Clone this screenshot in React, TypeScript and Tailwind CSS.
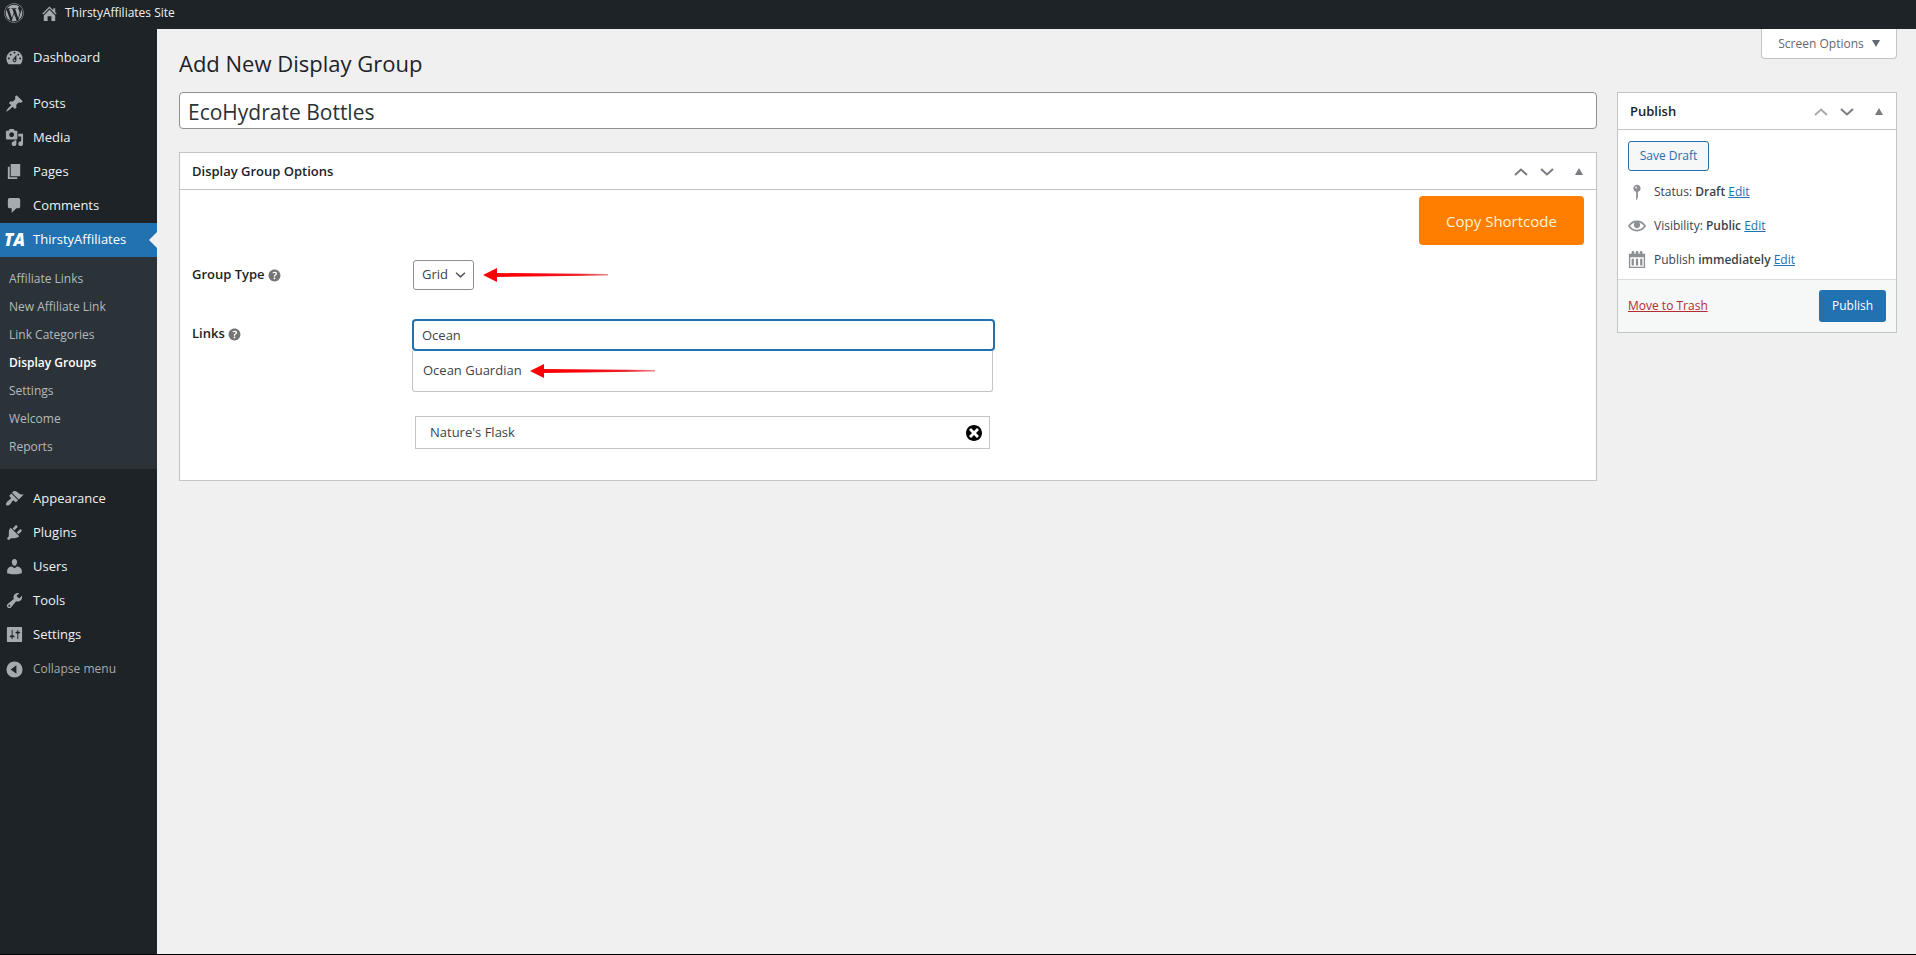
import type { ReactNode } from "react";
import { FaWordpress } from "react-icons/fa";

const paths = {
  home: "M16 8.5l1.53 1.53-1.06 1.06L10 4.6l-6.47 6.49-1.06-1.06L10 2.5l4 4v-2h2v4zm-6-2.46l6 5.99V18h-4v-5H8v5H4v-5.97z",
  dashboard:
    "M3.76 17h12.48A8.17 8.17 0 0 0 18.5 11.3c0-4.7-3.8-8.3-8.5-8.3s-8.5 3.6-8.5 8.3c0 2.2.85 4.2 2.26 5.7zM10 4c.55 0 1 .45 1 1s-.45 1-1 1-1-.45-1-1 .45-1 1-1zM6 6c.55 0 1 .45 1 1s-.45 1-1 1-1-.45-1-1 .45-1 1-1zm8 0c.55 0 1 .45 1 1s-.45 1-1 1-1-.45-1-1 .45-1 1-1zm-5.37 5.55L12 7v6c0 1.1-.9 2-2 2s-2-.9-2-2c0-.57.24-1.08.63-1.45zM4 10c.55 0 1 .45 1 1s-.45 1-1 1-1-.45-1-1 .45-1 1-1zm12 0c.55 0 1 .45 1 1s-.45 1-1 1-1-.45-1-1 .45-1 1-1zm-5 3c0-.55-.45-1-1-1s-1 .45-1 1 .45 1 1 1 1-.45 1-1z",
  posts:
    "M10.44 3.02l1.82-1.82 6.36 6.35-1.83 1.82c-1.05-.68-2.48-.57-3.41.36l-.75.75c-.92.93-1.04 2.35-.35 3.41l-1.83 1.82-2.41-2.41-2.8 2.79c-.42.42-3.38 2.71-3.8 2.29s1.86-3.39 2.28-3.81l2.79-2.79L4.1 9.36l1.83-1.82c1.05.69 2.48.57 3.4-.36l.75-.75c.93-.92 1.05-2.35.36-3.41z",
  media:
    "M13 11V4c0-.55-.45-1-1-1h-1.67L9 1H5L3.67 3H2c-.55 0-1 .45-1 1v7c0 .55.45 1 1 1h10c.55 0 1-.45 1-1zM7 4.5c1.38 0 2.5 1.12 2.5 2.5S8.38 9.5 7 9.5 4.5 8.38 4.5 7 5.62 4.5 7 4.5zM14 6h5v10.5c0 1.38-1.12 2.5-2.5 2.5S14 17.88 14 16.5s1.12-2.5 2.5-2.5c.17 0 .34.02.5.05V9h-3V6zm-4 8.05V13h2v3.5c0 1.38-1.12 2.5-2.5 2.5S7 17.88 7 16.5 8.12 14 9.5 14c.17 0 .34.02.5.05z",
  pages: "M6 15V2h10v13H6zm-1 1h8v2H3V5h2v11z",
  comments:
    "M5 2h9c1.1 0 2 .9 2 2v7c0 1.1-.9 2-2 2h-2l-5 5v-5H5c-1.1 0-2-.9-2-2V4c0-1.1.9-2 2-2z",
  appearance:
    "M14.48 11.06L7.41 3.99l1.5-1.5c.5-.56 2.3-.47 3.51.32 1.21.8 1.43 1.28 2.91 2.1 1.18.64 2.45 1.26 4.45.85zm-.71.71L6.7 4.7 4.93 6.47c-.39.39-.39 1.02 0 1.41l1.06 1.06c.39.39.39 1.03 0 1.42-.6.6-1.43 1.11-2.21 1.69-.35.26-.7.53-1.01.84C1.43 14.23.4 16.08 1.4 17.07c.99 1 2.84-.03 4.18-1.36.31-.31.58-.66.85-1.02.57-.78 1.08-1.61 1.69-2.21.39-.39 1.02-.39 1.41 0l1.06 1.06c.39.39 1.02.39 1.41 0z",
  plugins:
    "M13.11 4.36L9.87 7.6 8 5.73l3.24-3.24c.35-.34 1.05-.2 1.56.32.52.51.66 1.21.31 1.55zm-8 1.77l.91-1.12 9.01 9.01-1.19.84c-.71.71-2.63 1.16-3.82 1.16H6.14L4.9 17.26c-.59.59-1.54.59-2.12 0-.59-.58-.59-1.53 0-2.12l1.24-1.24v-3.88c0-1.13.4-3.19 1.09-3.89zm7.26 3.97l3.24-3.24c.34-.35 1.04-.21 1.55.31.52.51.66 1.21.31 1.55l-3.24 3.25z",
  users:
    "M10 9.25c-2.27 0-2.73-3.44-2.73-3.44C7 4.02 7.82 2 9.97 2c2.16 0 2.98 2.02 2.71 3.81 0 0-.41 3.44-2.68 3.44zm0 2.57L12.72 10c2.39 0 5.02 2.33 5.02 4.53v2.49s-3.65 1.13-7.74 1.13c-4.15 0-7.74-1.13-7.74-1.13v-2.49c0-2.25 2.44-4.48 4.97-4.48z",
  tools:
    "M16.68 9.77c-1.34 1.34-3.3 1.67-4.95.99l-5.41 6.52c-.99.99-2.59.99-3.58 0s-.99-2.59 0-3.57l6.52-5.42c-.68-1.65-.35-3.61.99-4.95 1.28-1.28 3.12-1.62 4.72-1.06l-2.89 2.89 2.82 2.82 2.86-2.87c.53 1.58.18 3.39-1.08 4.65zM3.81 16.21c.4.39 1.04.39 1.43 0 .4-.4.4-1.04 0-1.43-.39-.4-1.03-.4-1.43 0-.39.39-.39 1.03 0 1.43z",
  settings:
    "M18 17V3c0-.55-.45-1-1-1H3c-.55 0-1 .45-1 1v14c0 .55.45 1 1 1h14c.55 0 1-.45 1-1zM8 11h1c.55 0 1 .45 1 1s-.45 1-1 1H8v1.5c0 .28-.22.5-.5.5s-.5-.22-.5-.5V13H6c-.55 0-1-.45-1-1s.45-1 1-1h1V5.5c0-.28.22-.5.5-.5s.5.22.5.5V11zm5-2h-1c-.55 0-1-.45-1-1s.45-1 1-1h1V5.5c0-.28.22-.5.5-.5s.5.22.5.5V7h1c.55 0 1 .45 1 1s-.45 1-1 1h-1v5.5c0 .28-.22.5-.5.5s-.5-.22-.5-.5V9z",
  collapse: "M10 1.5a8.5 8.5 0 1 0 0 17 8.5 8.5 0 0 0 0-17zM6 10l6-4.5v9z",
  pin: "M14 6c0 1.86-1.28 3.41-3 3.86V16c0 1-2 3-2 3V9.86c-1.72-.45-3-2-3-3.86 0-2.21 1.79-4 4-4s4 1.79 4 4zM8 5c0 .55.45 1 1 1s1-.45 1-1-.45-1-1-1-1 .45-1 1z",
  eye: "M19.7 9.4C17.7 6 14 3.9 10 3.9S2.3 6 .3 9.4L0 10l.3.6c2 3.4 5.7 5.5 9.7 5.5s7.7-2.1 9.7-5.5l.3-.6-.3-.6zM10 14.1c-3.1 0-6-1.6-7.7-4.1C3.6 8 5.7 6.6 8 6.1c-.9.6-1.5 1.7-1.5 2.9 0 1.9 1.6 3.5 3.5 3.5s3.5-1.6 3.5-3.5c0-1.2-.6-2.3-1.5-2.9 2.3.5 4.4 1.9 5.7 3.9-1.7 2.5-4.6 4.1-7.7 4.1z",
  calendar:
    "M1 3h3V1.5a1.5 1.5 0 0 1 3 0V3h1.5V1.5a1.5 1.5 0 0 1 3 0V3H13V1.5a1.5 1.5 0 0 1 3 0V3h3v16H1zM2.5 7v10.5h15V7zM4 8.5h2.5V16H4zM8.75 8.5h2.5V16h-2.5zM13.5 8.5H16V16h-2.5z",
  dismiss:
    "M10 2c4.42 0 8 3.58 8 8s-3.58 8-8 8-8-3.58-8-8 3.58-8 8-8zm5 11l-3-3 3-3-2-2-3 3-3-3-2 2 3 3-3 3 2 2 3-3 3 3z",
  help: "M17 10c0-3.87-3.14-7-7-7-3.87 0-7 3.13-7 7s3.13 7 7 7c3.86 0 7-3.13 7-7zm-6.3 1.48H9.14v-.43c0-.38.08-.7.24-.98s.46-.57.88-.89c.41-.29.68-.53.81-.71.14-.18.2-.39.2-.62 0-.25-.09-.44-.28-.58-.19-.13-.45-.19-.79-.19-.58 0-1.25.19-2 .57l-.64-1.28c.87-.49 1.8-.74 2.77-.74.81 0 1.45.2 1.92.58.48.39.71.91.71 1.55 0 .43-.09.8-.29 1.11-.19.32-.57.67-1.11 1.06-.38.28-.61.49-.71.63-.1.15-.15.34-.15.57v.35zm-1.47 2.74c-.18-.17-.27-.42-.27-.73 0-.33.08-.58.26-.75s.43-.25.77-.25c.32 0 .57.09.75.26s.27.42.27.74c0 .3-.09.55-.27.72-.18.18-.43.27-.75.27-.33 0-.58-.09-.76-.26z",
};

type IconName = keyof typeof paths;

function Icon({ name, className }: { name: IconName; className: string }) {
  return (
    <svg viewBox="0 0 20 20" aria-hidden="true" className={`shrink-0 fill-current ${className}`}>
      <path fillRule="evenodd" d={paths[name]} />
    </svg>
  );
}

function MenuItem({ icon, label }: { icon: IconName; label: string }) {
  return (
    <li>
      <a href="#" className="flex h-[34px] items-center gap-[9px] pl-[5px] text-[#f0f0f1]">
        <Icon name={icon} className="mb-0.5 size-[19px] text-[#a7aaad]" />
        {label}
      </a>
    </li>
  );
}

function Sidebar() {
  const submenu = [
    "Affiliate Links",
    "New Affiliate Link",
    "Link Categories",
    "Display Groups",
    "Settings",
    "Welcome",
    "Reports",
  ];
  return (
    <nav className="w-[157px] shrink-0 bg-[#1d2327] pt-3 text-[13px]">
      <ul>
        <MenuItem icon="dashboard" label="Dashboard" />
      </ul>
      <ul className="mt-3">
        <MenuItem icon="posts" label="Posts" />
        <MenuItem icon="media" label="Media" />
        <MenuItem icon="pages" label="Pages" />
        <MenuItem icon="comments" label="Comments" />
        <li>
          <a href="#" className="relative flex h-[34px] items-center gap-2 bg-[#2271b1] pl-1 text-white">
            <span className="w-[21px] text-[17px] font-extrabold italic">TA</span>
            ThirstyAffiliates
            <svg viewBox="0 0 8 16" aria-hidden="true" className="absolute right-0 h-4 w-2 fill-[#f0f0f0]">
              <path d="M8 0v16L0 8z" />
            </svg>
          </a>
          <ul className="bg-[#2c3338] py-2">
            {submenu.map((label) => (
              <li key={label}>
                <a
                  href="#"
                  className={`flex h-7 items-center pl-[9px] text-[12px] ${
                    label === "Display Groups" ? "font-semibold text-white" : "text-[#b4b9be]"
                  }`}
                >
                  {label}
                </a>
              </li>
            ))}
          </ul>
        </li>
      </ul>
      <ul className="mt-[13px]">
        <MenuItem icon="appearance" label="Appearance" />
        <MenuItem icon="plugins" label="Plugins" />
        <MenuItem icon="users" label="Users" />
        <MenuItem icon="tools" label="Tools" />
        <MenuItem icon="settings" label="Settings" />
      </ul>
      <button type="button" className="flex h-[34px] items-center gap-[9px] pl-[5px] text-[12px] text-[#a7aaad]">
        <Icon name="collapse" className="size-[19px]" />
        Collapse menu
      </button>
    </nav>
  );
}

function Chevron({ up = false, className }: { up?: boolean; className: string }) {
  return (
    <svg viewBox="0 0 14 8" aria-hidden="true" className={`fill-none stroke-current stroke-2 ${className}`}>
      <path d={up ? "M1 7l6-5.5L13 7" : "M1 1l6 5.5L13 1"} />
    </svg>
  );
}

function PanelHeader({ title, first = false }: { title: string; first?: boolean }) {
  return (
    <div className="flex h-[37px] items-center justify-between border-b border-[#c3c4c7] px-3 pt-0.5">
      <h2 className="font-semibold text-[#1d2327]">{title}</h2>
      <div className="flex items-center gap-3 text-[#787c82]">
        <button type="button" aria-label="Move up" className={first ? "text-[#a7aaad]" : ""}>
          <Chevron up className="h-2 w-3.5" />
        </button>
        <button type="button" aria-label="Move down">
          <Chevron className="h-2 w-3.5" />
        </button>
        <button type="button" aria-label="Toggle panel" className="flex w-[18px] justify-end pr-px pb-0.5">
          <svg viewBox="0 0 8 7" aria-hidden="true" className="h-[7px] w-2 fill-current">
            <path d="M4 0l4 7H0z" />
          </svg>
        </button>
      </div>
    </div>
  );
}

function RedArrow() {
  return (
    <svg viewBox="0 0 126 16" aria-hidden="true" className="h-4 w-[126px] shrink-0">
      <defs>
        <linearGradient id="tail" x1="0" x2="1">
          <stop offset="0.3" stopColor="#fb0007" />
          <stop offset="0.75" stopColor="#e8252a" />
          <stop offset="1" stopColor="#f0888a" />
        </linearGradient>
      </defs>
      <path d="M12 6l113 1v1.5L12 10z" fill="url(#tail)" />
      <path d="M0 8L14 1v14z" fill="#fb0007" />
    </svg>
  );
}

function FieldLabel({ htmlFor, children }: { htmlFor: string; children: ReactNode }) {
  return (
    <label htmlFor={htmlFor} className="flex h-[30px] w-[221px] shrink-0 items-center gap-px font-semibold text-[#1d2327]">
      {children}
      <Icon name="help" className="size-[17px] text-[#757575]" />
    </label>
  );
}

function OptionsPanel() {
  return (
    <section className="border border-[#c3c4c7] bg-white">
      <PanelHeader title="Display Group Options" />
      <div className="flex flex-col px-3 pt-1.5 pb-[31px]">
        <button type="button" className="h-[49px] w-[165px] self-end rounded bg-[#ff7e00] pt-0.5 text-[15px] text-[#fff3d6]">
          Copy Shortcode
        </button>
        <div className="mt-[15px] flex items-center">
          <FieldLabel htmlFor="group-type">Group Type</FieldLabel>
          <div className="relative flex items-center">
            <select
              id="group-type"
              defaultValue="Grid"
              className="h-[30px] w-[61px] appearance-none rounded-[3px] border border-[#8c8f94] bg-white pl-2"
            >
              <option>Grid</option>
              <option>List</option>
            </select>
            <Chevron className="pointer-events-none absolute right-2 h-1.5 w-[11px] text-[#50575e]" />
          </div>
          <div className="ml-[9px]">
            <RedArrow />
          </div>
        </div>
        <div className="mt-[29px] flex">
          <FieldLabel htmlFor="links">Links</FieldLabel>
          <div className="-ml-px w-[583px]">
            <input
              id="links"
              type="text"
              defaultValue="Ocean"
              className="block h-8 w-full rounded border-2 border-[#2271b1] bg-white px-2"
            />
            <ul className="mr-0.5 rounded-b-[3px] border border-t-0 border-[#c3c4c7] bg-white">
              <li className="flex h-10 items-center gap-2 pl-2.5">
                Ocean Guardian
                <RedArrow />
              </li>
            </ul>
            <ul className="mt-6 mr-[5px] ml-[3px]">
              <li className="flex h-[33px] items-center justify-between border border-[#c3c4c7] pr-[5px] pl-3.5">
                Nature's Flask
                <button type="button" aria-label="Remove Nature's Flask" className="text-black">
                  <Icon name="dismiss" className="size-5" />
                </button>
              </li>
            </ul>
          </div>
        </div>
      </div>
    </section>
  );
}

function PublishRow({ icon, label, value }: { icon: IconName; label: string; value: string }) {
  return (
    <div className="flex h-[34px] items-center gap-2">
      <Icon name={icon} className="size-[18px] text-[#8c8f94]" />
      <p>
        {label} <b className="font-semibold">{value}</b>{" "}
        <a href="#" className="text-[#2271b1] underline">
          Edit
        </a>
      </p>
    </div>
  );
}

function PublishPanel() {
  return (
    <aside className="w-[280px] shrink-0 border border-[#c3c4c7] bg-white text-[12px]">
      <div className="text-[13px]">
        <PanelHeader title="Publish" first />
      </div>
      <div className="px-2.5 pt-[11px] pb-0.5">
        <button type="button" className="mb-1 h-[30px] w-[81px] rounded-[3px] border border-[#2271b1] bg-[#f6f7f7] text-[#2271b1]">
          Save Draft
        </button>
        <PublishRow icon="pin" label="Status:" value="Draft" />
        <PublishRow icon="eye" label="Visibility:" value="Public" />
        <PublishRow icon="calendar" label="Publish" value="immediately" />
      </div>
      <div className="flex items-center justify-between border-t border-[#dcdcde] bg-[#f6f7f7] p-2.5">
        <a href="#" className="text-[#b32d2e] underline">
          Move to Trash
        </a>
        <button type="button" className="h-8 w-[67px] rounded-[3px] bg-[#2271b1] text-white">
          Publish
        </button>
      </div>
    </aside>
  );
}

export default function App() {
  return (
    <div className="flex min-h-screen flex-col border-b border-black bg-[#f0f0f0] font-['Open_Sans','Noto_Sans',sans-serif] text-[13px] text-[#3c434a]">
      <header className="flex h-[29px] items-center gap-4 bg-[#1d2327] pb-[3px] pl-1 text-[12px] text-[#f0f0f1]">
        <a href="#" aria-label="About WordPress">
          <FaWordpress className="size-5 text-[#a7aaad]" />
        </a>
        <a href="#" className="flex items-center gap-1.5">
          <Icon name="home" className="size-[19px] text-[#a7aaad]" />
          ThirstyAffiliates Site
        </a>
      </header>
      <div className="flex grow">
        <Sidebar />
        <main className="min-w-0 grow pr-[19px] pl-[22px]">
          <div className="flex items-start justify-between">
            <h1 className="flex h-[63px] items-center pt-1.5 text-[22px] text-[#1d2327]">Add New Display Group</h1>
            <button
              type="button"
              className="flex h-[30px] w-[136px] items-center justify-center gap-2 rounded-b border border-t-0 border-[#c3c4c7] bg-white text-[12px] text-[#646970]"
            >
              Screen Options
              <svg viewBox="0 0 8 7" aria-hidden="true" className="h-[7px] w-2 fill-current">
                <path d="M0 0h8L4 7z" />
              </svg>
            </button>
          </div>
          <div className="flex items-start gap-5">
            <div className="min-w-0 grow">
              <input
                type="text"
                aria-label="Group title"
                defaultValue="EcoHydrate Bottles"
                className="mb-[23px] block h-[37px] w-full rounded border border-[#8c8f94] bg-white px-2 pt-0.5 text-[21px] text-[#2c3338]"
              />
              <OptionsPanel />
            </div>
            <PublishPanel />
          </div>
        </main>
      </div>
    </div>
  );
}
